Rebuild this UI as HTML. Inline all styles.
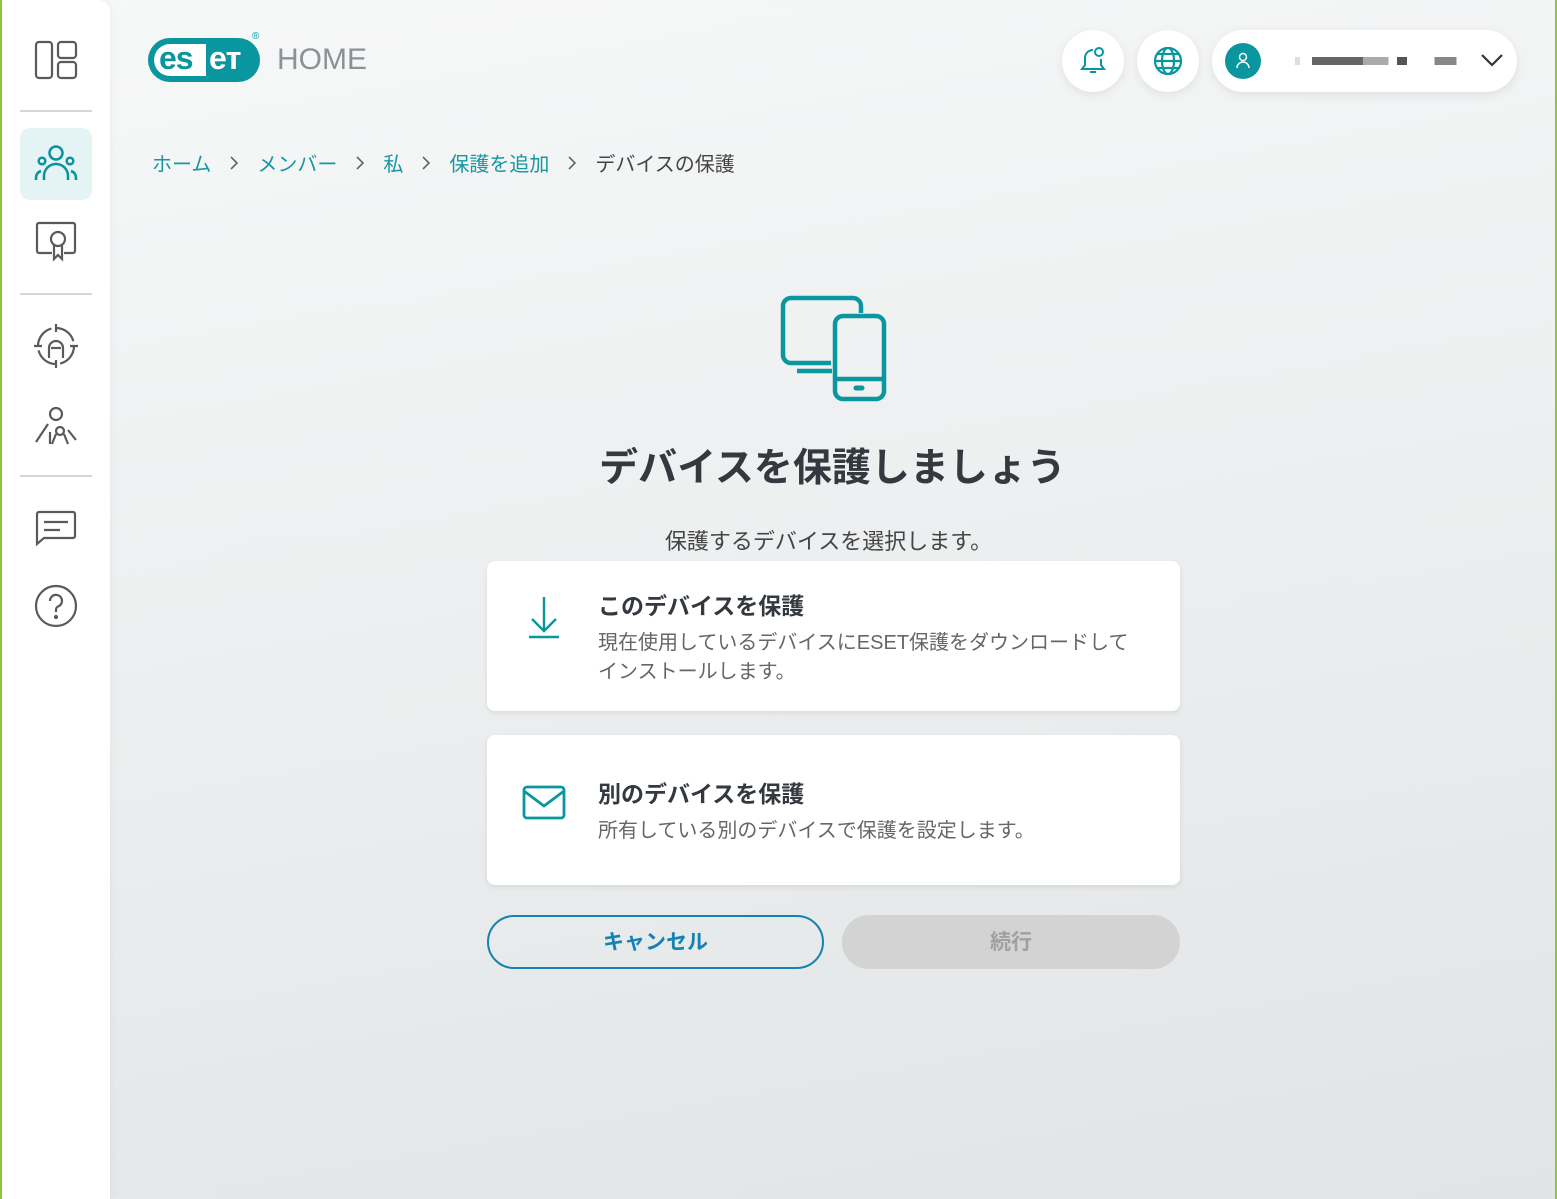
<!DOCTYPE html>
<html><head><meta charset="utf-8"><style>
*{margin:0;padding:0;box-sizing:border-box}
body{width:1557px;height:1199px;overflow:hidden;position:relative;font-family:"Liberation Sans","Noto Sans CJK JP",sans-serif;background:linear-gradient(170deg,#f7f8f8 0%,#eceeef 50%,#e1e4e5 100%);color:#3a3f44}
.gl{position:absolute;left:0;top:0;width:2px;height:1199px;background:#8dc63f}
.gr{position:absolute;right:0;top:0;width:2px;height:1199px;background:#8dc63f}
.side{position:absolute;left:2px;top:0;width:108px;height:1199px;background:#fff;border-top-right-radius:12px;box-shadow:2px 0 8px rgba(0,0,0,.04)}
.sep{position:absolute;left:18px;width:72px;height:2px;background:#d6d6d6}
.ic{position:absolute;left:18px;width:72px;height:72px;display:flex;align-items:center;justify-content:center;border-radius:10px}
.abs{position:absolute}
.circ{position:absolute;top:30px;width:62px;height:62px;border-radius:50%;background:#fff;box-shadow:0 3px 10px rgba(0,0,0,.08);display:flex;align-items:center;justify-content:center}
.bc{position:absolute;top:148px;left:152px;font-size:20px;color:#1896a2;white-space:nowrap;display:flex;align-items:center}
.bc span{margin-right:18px}
.bc svg{margin-right:18px}
.card{position:absolute;left:487px;width:693px;height:150px;background:#fff;border-radius:8px;box-shadow:0 2px 6px rgba(0,0,0,.08)}
.card h3{position:absolute;left:111px;font-size:23px;font-weight:bold;color:#33393f}
.card p{position:absolute;left:111px;font-size:20px;color:#666;line-height:29px}
</style></head><body>
<div class="gl"></div><div class="gr"></div>
<div class="side">
 <div class="ic" style="top:24px"><svg width="44" height="40" viewBox="0 0 44 40" fill="none" stroke="#5a5a5a" stroke-width="2.2"><rect x="2" y="2" width="16" height="36" rx="3"/><rect x="24" y="2" width="18" height="16" rx="3"/><rect x="24" y="22" width="18" height="16" rx="3"/></svg></div>
 <div class="sep" style="top:110px"></div>
 <div class="ic" style="top:128px;background:#e4f4f5"><svg width="44" height="40" viewBox="0 0 44 40" fill="none" stroke="#0a939c" stroke-width="2.5"><circle cx="22" cy="9" r="6.5"/><circle cx="8" cy="17" r="3.3"/><circle cx="36" cy="17" r="3.3"/><path d="M10 36v-4a12 12 0 0 1 24 0v4M2 36v-2a7 7 0 0 1 5-7M42 36v-2a7 7 0 0 0-5-7"/></svg></div>
 <div class="ic" style="top:205px"><svg width="44" height="44" viewBox="0 0 44 44" fill="none" stroke="#5a5a5a" stroke-width="2.2"><path d="M18 34H5a2 2 0 0 1-2-2V6a2 2 0 0 1 2-2h34a2 2 0 0 1 2 2v26a2 2 0 0 1-2 2h-9"/><circle cx="24" cy="20" r="7"/><path d="M20 26v14l4-4 4 4V26"/></svg></div>
 <div class="sep" style="top:293px"></div>
 <div class="ic" style="top:310px"><svg width="44" height="44" viewBox="0 0 44 44" fill="none" stroke="#5a5a5a" stroke-width="2.2"><circle cx="22" cy="22" r="18" stroke-dasharray="24 4"/><path d="M22 0v8M22 36v8M0 22h8M36 22h8"/><path d="M15 34v-10a7 7 0 0 1 14 0v10"/><path d="M17 24h10"/></svg></div>
 <div class="ic" style="top:390px"><svg width="44" height="44" viewBox="0 0 44 44" fill="none" stroke="#5a5a5a" stroke-width="2.2"><circle cx="22" cy="10" r="6"/><circle cx="26" cy="27" r="4"/><path d="M14 20L2 38M16 28v12M30 30l4 10M34 26l8 10M22 30l-4 10"/></svg></div>
 <div class="sep" style="top:475px"></div>
 <div class="ic" style="top:492px"><svg width="44" height="40" viewBox="0 0 44 40" fill="none" stroke="#5a5a5a" stroke-width="2.2"><path d="M3 36V6a2 2 0 0 1 2-2h34a2 2 0 0 1 2 2v22a2 2 0 0 1-2 2H10z"/><path d="M10 14h24M10 22h16"/></svg></div>
 <div class="ic" style="top:570px"><svg width="44" height="44" viewBox="0 0 44 44" fill="none" stroke="#5a5a5a" stroke-width="2.2"><circle cx="22" cy="22" r="20"/><path d="M16 17a6 6 0 1 1 8 5.5c-1.5.7-2 2-2 3.5v2"/><circle cx="22" cy="33" r="1" fill="#5a5a5a"/></svg></div>
</div>
<div class="abs" style="left:148px;top:38px;width:112px;height:44px;border-radius:22px;background:#0a969f"></div>
<div class="abs" style="left:154px;top:44px;width:52px;height:32px;border-radius:16px 0 0 16px;background:#fff"></div>
<div class="abs" style="left:159px;top:40px;font-size:32px;font-weight:bold;color:#0a969f;letter-spacing:-1px">es</div>
<div class="abs" style="left:209px;top:40px;font-size:32px;font-weight:bold;color:#fff;letter-spacing:-1px">eт</div>
<div class="abs" style="left:252px;top:31px;font-size:10px;color:#0a969f">®</div>
<div class="abs" style="left:277px;top:43px;font-size:30px;color:#8b9196">HOME</div>
<div class="circ" style="left:1062px"><svg width="28" height="30" viewBox="0 0 28 30" fill="none" stroke="#0a969f" stroke-width="2"><path d="M14 4a8 8 0 0 0-8 8v7l-3 4h22l-3-4v-6"/><path d="M11 26h6"/><circle cx="20" cy="6" r="4"/></svg></div>
<div class="circ" style="left:1137px"><svg width="30" height="30" viewBox="0 0 30 30" fill="none" stroke="#0a969f" stroke-width="2.2"><circle cx="15" cy="15" r="13"/><ellipse cx="15" cy="15" rx="6" ry="13"/><path d="M2 15h26M4 8h22M4 22h22"/></svg></div>
<div class="abs" style="left:1212px;top:30px;width:305px;height:62px;border-radius:31px;background:#fff;box-shadow:0 3px 10px rgba(0,0,0,.08)"></div>
<div class="abs" style="left:1225px;top:43px;width:36px;height:36px;border-radius:50%;background:#0a969f"><svg width="36" height="36" viewBox="0 0 36 36" fill="none" stroke="#fff" stroke-width="1.5"><circle cx="18" cy="14" r="3.5"/><path d="M12 25a6 6 0 0 1 12 0"/></svg></div>
<div class="abs" style="left:1295px;top:57px;width:170px;height:8px;background:linear-gradient(90deg,#ddd 0 3%,transparent 3% 10%,#666 10% 40%,#aaa 40% 55%,transparent 55% 60%,#555 60% 66%,transparent 66% 82%,#888 82% 95%,transparent 95%)"></div>
<svg class="abs" style="left:1480px;top:52px" width="24" height="16" viewBox="0 0 24 16" fill="none" stroke="#333" stroke-width="2.2"><path d="M2 3l10 10L22 3"/></svg>
<div class="bc"><span>ホーム</span><svg width="10" height="16" viewBox="0 0 10 16" fill="none" stroke="#666" stroke-width="1.6"><path d="M2 2l6 6-6 6"/></svg><span>メンバー</span><svg width="10" height="16" viewBox="0 0 10 16" fill="none" stroke="#666" stroke-width="1.6"><path d="M2 2l6 6-6 6"/></svg><span>私</span><svg width="10" height="16" viewBox="0 0 10 16" fill="none" stroke="#666" stroke-width="1.6"><path d="M2 2l6 6-6 6"/></svg><span>保護を追加</span><svg width="10" height="16" viewBox="0 0 10 16" fill="none" stroke="#666" stroke-width="1.6"><path d="M2 2l6 6-6 6"/></svg><span style="color:#444">デバイスの保護</span></div>
<svg class="abs" style="left:780px;top:294px" width="108" height="108" viewBox="0 0 108 108" fill="none" stroke="#0a969f" stroke-width="4.5" stroke-linejoin="round"><path d="M51 69H11a8 8 0 0 1-8-8V12a8 8 0 0 1 8-8h62a8 8 0 0 1 8 8v7"/><path d="M17 77h35"/><rect x="55" y="22" width="49" height="83" rx="8"/><path d="M55 85h49"/><path d="M76 94h6" stroke-width="5" stroke-linecap="round"/></svg>
<div class="abs" style="left:0;width:1665px;top:437px;text-align:center;font-size:39px;font-weight:bold;color:#33393f">デバイスを保護しましょう</div>
<div class="abs" style="left:0;width:1657px;top:524px;text-align:center;font-size:22px;color:#444">保護するデバイスを選択します。</div>
<div class="card" style="top:561px">
 <svg class="abs" style="left:40px;top:34px" width="34" height="44" viewBox="0 0 34 44" fill="none" stroke="#0a969f" stroke-width="2.4"><path d="M17 2v34M5 24l12 12 12-12M2 42h30"/></svg>
 <h3 style="top:26px">このデバイスを保護</h3>
 <p style="top:68px">現在使用しているデバイスにESET保護をダウンロードして<br>インストールします。</p>
</div>
<div class="card" style="top:735px">
 <svg class="abs" style="left:35px;top:50px" width="44" height="36" viewBox="0 0 44 36" fill="none" stroke="#0a969f" stroke-width="2.8"><rect x="2" y="2" width="40" height="31" rx="3"/><path d="M2 6l20 15 20-15"/></svg>
 <h3 style="top:40px">別のデバイスを保護</h3>
 <p style="top:82px">所有している別のデバイスで保護を設定します。</p>
</div>
<div class="abs" style="left:487px;top:915px;width:337px;height:54px;border:2.5px solid #1682b4;border-radius:27px;text-align:center;line-height:52px;font-size:21px;font-weight:bold;color:#1682b4">キャンセル</div>
<div class="abs" style="left:842px;top:915px;width:338px;height:54px;background:#d3d3d3;border-radius:27px;text-align:center;line-height:56px;font-size:21px;font-weight:bold;color:#a0a0a0">続行</div>
</body></html>
